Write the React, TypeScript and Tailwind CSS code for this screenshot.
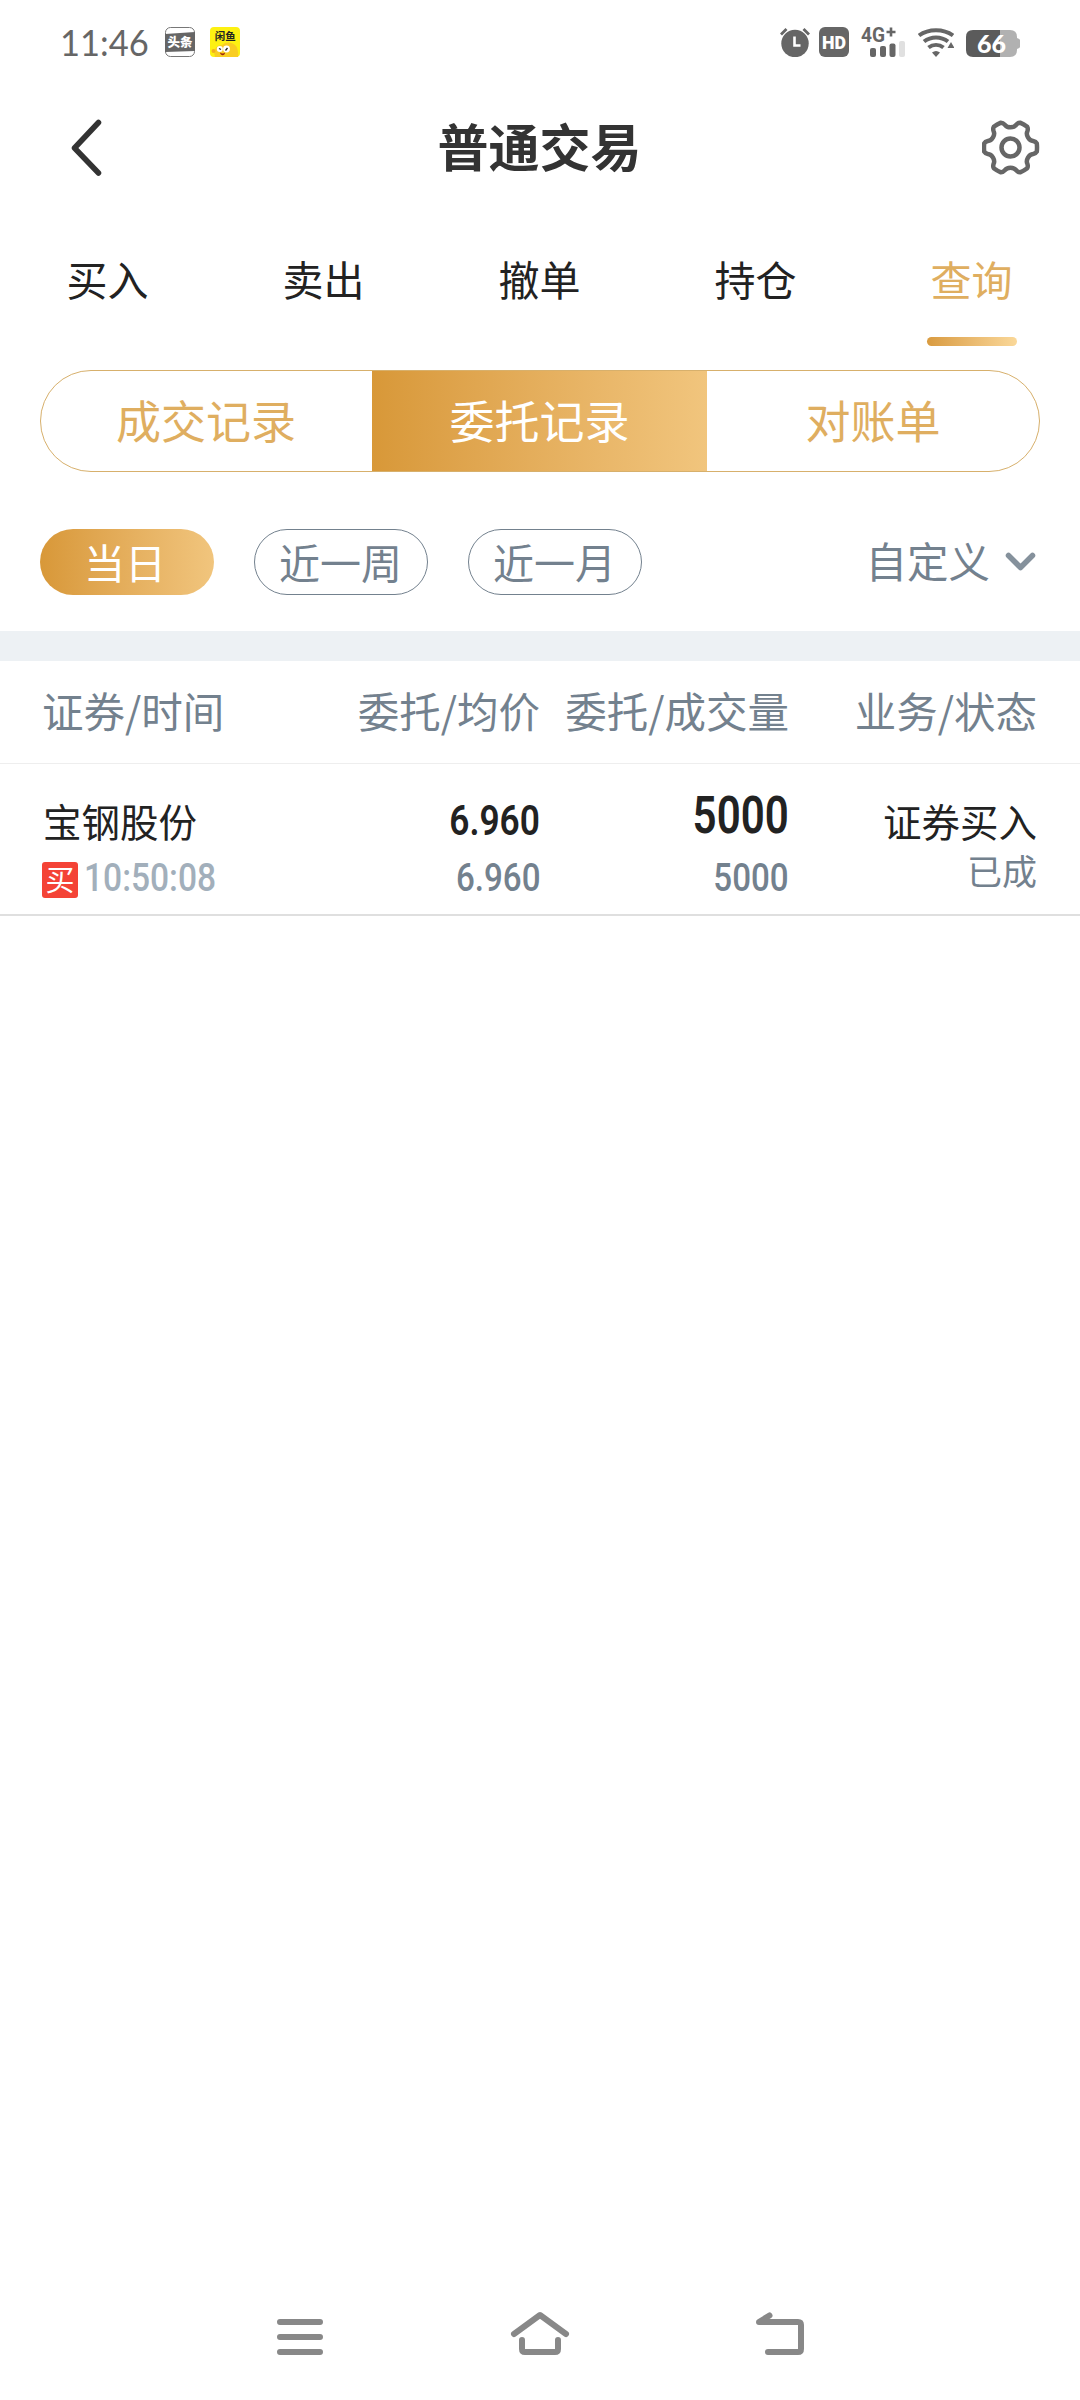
import React from "react";

const gold = "bg-gradient-to-r from-[#d89838] to-[#f1c57d]";

function StatusBar() {
  return (
    <div className="flex h-[84px] items-center pl-[60px] pr-[60px] text-[#666]">
      <span className="w-[105px] origin-left scale-x-[0.92] font-['Lato'] text-[37.5px] leading-none">11:46</span>
      <svg className="h-[30px] w-[30px]" viewBox="0 0 30 30">
        <rect x="0.5" y="0.5" width="29" height="29" rx="5" fill="#fff" stroke="#777" />
        <path d="M0 7L30 5V24L0 25Z" fill="#666" />
        <text x="15" y="19.5" fontSize="12.5" fontWeight="900" textAnchor="middle" fill="#fff">头条</text>
      </svg>
      <svg className="ml-[15px] h-[30px] w-[30px]" viewBox="0 0 30 30">
        <rect width="30" height="30" rx="4" fill="#fdf112" />
        <text x="15.2" y="13" fontSize="10.5" fontWeight="700" textAnchor="middle" fill="#222">闲鱼</text>
        <path d="M5 30C3 23 6 18 12 18C16 14 23 15 26 19C29 23 28 30 28 30Z" fill="#f9cd22" />
        <circle cx="3.5" cy="24" r="2" fill="#f2ae1c" />
        <circle cx="9.8" cy="22" r="3" fill="#fff" />
        <circle cx="16.5" cy="22" r="3.4" fill="#fff" />
        <path d="M9 21.5l2 1M15.5 23.5l2-2.5" stroke="#222" strokeWidth="1.3" />
        <path d="M10 25.5C12 27 14 26.5 15 25.5C15 29 10.5 29 10 25.5Z" fill="#9b2412" />
      </svg>
      <div className="ml-auto flex items-center">
        <svg className="h-[30px] w-[30px]" viewBox="0 0 30 30">
          <circle cx="15" cy="16.5" r="13.7" fill="#666" />
          <path d="M1 7.5L6.5 2M29 7.5L23.5 2" stroke="#666" strokeWidth="2.8" />
          <path d="M14.5 9.500V18.500H20.500" fill="none" stroke="#fff" strokeWidth="2.600" />
        </svg>
        <svg className="ml-[9px] h-[30px] w-[30px]" viewBox="0 0 30 30">
          <rect width="30" height="30" rx="6" fill="#666" />
          <text x="3" y="21.700" fontFamily="Roboto" fontSize="18.500" fontWeight="900" fill="#fff" textLength="24" lengthAdjust="spacingAndGlyphs">HD</text>
        </svg>
        <svg className="ml-[12px] h-[30px] w-[45px] overflow-visible" viewBox="0 0 45 30">
          <text x="0" y="15" fontFamily="Roboto" fontSize="20" fontWeight="700" fill="#666" textLength="24" lengthAdjust="spacingAndGlyphs">4G</text>
          <path d="M25.500 5H34.500M30 0.500V9.500" stroke="#666" strokeWidth="2.600" />
          <rect x="9" y="21" width="6" height="9" rx="2" fill="#666" />
          <rect x="19" y="19" width="6" height="11" rx="2" fill="#666" />
          <rect x="28.500" y="16.500" width="6" height="13.500" rx="2" fill="#666" />
          <rect x="38" y="14" width="6" height="16" rx="2" fill="#e0e0e0" />
        </svg>
        <svg className="ml-[12px] h-[30px] w-[36px]" viewBox="0 0 36 30">
          <g fill="none" stroke="#666" strokeWidth="4">
            <path d="M1 8.500C10.500 1.500 25.500 1.500 35 8.500" />
            <path d="M6 14.500C13 9 23 9 30 14.500" />
            <path d="M10.500 20.500C15 17 21 17 25.500 20.500" />
          </g>
          <path d="M14 25.500Q18 22.500 22 25.500L18 30Z" fill="#666" />
          <path d="M29.500 21L33 15L36.500 21Z" fill="#666" />
        </svg>
        <svg className="ml-[12px] h-[30px] w-[54px]" viewBox="0 0 54 30">
          <path d="M34 3H44Q51 3 51 10V11Q54 12 54 13V20Q54 21 51 22V23Q51 30 44 30H34Z" fill="#b1b1b1" />
          <path d="M7 3H34V30H7Q0 30 0 23V10Q0 3 7 3Z" fill="#5b5b5b" />
          <text x="25.500" y="26" fontFamily="Lato" fontSize="25" fontWeight="900" textAnchor="middle" fill="#fff">66</text>
        </svg>
      </div>
    </div>
  );
}

function gearPath() {
  const p = (deg: number, r: number) => {
    const a = (deg * Math.PI) / 180;
    return `${(r * Math.cos(a)).toFixed(2)} ${(r * Math.sin(a)).toFixed(2)}`;
  };
  let d = `M${p(-9, 26.600)}`;
  for (let k = 0; k < 360; k += 60) {
    d += `Q${p(k, 26.800)} ${p(k + 9, 26.600)}`;
    d += `Q${p(k + 13, 26)} ${p(k + 16, 23.500)}`;
    d += `C${p(k + 20, 19.600)} ${p(k + 40, 19.600)} ${p(k + 44, 23.500)}`;
    d += `Q${p(k + 47, 26)} ${p(k + 51, 26.600)}`;
  }
  return d + "Z";
}

function TitleBar() {
  return (
    <header className="grid h-[128px] grid-cols-[58px_1fr_58px] items-center pl-[70px] pr-[40px]">
      <svg className="h-[58px] w-[58px]" viewBox="0 0 58 58">
        <path d="M28.500 3.500L4.500 29L28.500 54" fill="none" stroke="#333" strokeWidth="5.500" strokeLinecap="round" strokeLinejoin="round" />
      </svg>
      <h1 className="pb-[5px] pr-[31px] text-center text-[51px] font-bold leading-none text-[#333]">普通交易</h1>
      <svg className="h-[58px] w-[58px]" viewBox="-28.500 -28.500 58 58">
        <g fill="none" stroke="#666" strokeWidth="4.500" strokeLinejoin="round">
          <path d={gearPath()} />
          <circle r="9" />
        </g>
      </svg>
    </header>
  );
}

function Tabs() {
  return (
    <nav className="grid h-[134px] grid-cols-5">
      {["买入", "卖出", "撤单", "持仓", "查询"].map((t, i) => (
        <div key={t} className={`flex flex-col items-center pt-[46px] ${i === 4 ? "text-[#dfae60]" : "text-[#222]"}`}>
          <span className="-ml-px text-[41px] leading-[40px]">{t}</span>
          {i === 4 && <span className="mt-[39px] h-[9px] w-[90px] rounded-full bg-gradient-to-r from-[#d99b3f] to-[#fad899]" />}
        </div>
      ))}
    </nav>
  );
}

function Segments() {
  return (
    <div className="mx-[40px] mt-6 flex h-[102px] overflow-hidden rounded-full border border-[#d7b06c] text-[45px] text-[#dfae60]">
      <div className="flex w-[331px] items-center justify-center pb-[3px] pr-px">成交记录</div>
      <div className={`-my-px flex w-[335px] items-center justify-center pb-[3px] text-white ${gold}`}>委托记录</div>
      <div className="flex flex-1 items-center justify-center pb-[3px]">对账单</div>
    </div>
  );
}

function Filters() {
  return (
    <div className="mt-[57px] flex h-[66px] items-center gap-10 pl-[40px] pr-[44px] text-[41px] text-[#73818e]">
      <div className={`flex h-full w-[174px] items-center justify-center rounded-full pb-[2px] pr-1 text-white ${gold}`}>当日</div>
      <div className="flex h-full w-[174px] items-center justify-center rounded-full border border-[#73818e] pb-[2px] pr-px">近一周</div>
      <div className="flex h-full w-[174px] items-center justify-center rounded-full border border-[#73818e] pb-[2px] pr-px">近一月</div>
      <div className="ml-auto flex items-center gap-[15px]">
        <span className="pb-[2px] text-[41.500px]">自定义</span>
        <svg className="h-[20px] w-[31px]" viewBox="0 0 31 20">
          <path d="M3.500 3.500L15.500 15.500L27.500 3.500" fill="none" stroke="#85919c" strokeWidth="5.500" strokeLinecap="round" strokeLinejoin="round" />
        </svg>
      </div>
    </div>
  );
}

const cols = "grid grid-cols-[260px_237px_249px_248px] pl-[43px]";

function Orders() {
  return (
    <main className="mt-9 border-t-[30px] border-[#edf1f4]">
      <div className={`${cols} h-[103px] items-center border-b border-[#eee] pb-[3px] text-[41.500px] text-[#73818e]`}>
        <span className="-ml-px">证券/时间</span>
        <span className="text-right">委托/均价</span>
        <span className="text-right">委托/成交量</span>
        <span className="text-right">业务/状态</span>
      </div>
      <div className={`${cols} h-[152px] border-b-2 border-[#dfdfdf] text-[#222]`}>
        <div className="flex flex-col pt-[36px]">
          <span className="text-[38.500px] leading-[40px]">宝钢股份</span>
          <div className="-ml-px mt-[22px] flex h-[36px] items-center">
            <span className="flex h-[36px] w-[36px] items-center justify-center rounded-[3px] bg-[#f44336] pb-[3px] text-[29px] leading-none text-white">买</span>
            <span className="relative -top-[2px] ml-[6px] origin-left scale-x-[0.86] font-['Roboto'] text-[39px] font-medium leading-none text-[#a2afbb]">10:50:08</span>
          </div>
        </div>
        <div className="flex flex-col items-end pt-[34px] font-['Roboto'] leading-none">
          <span className="origin-right scale-x-[0.84] text-[42px] font-semibold leading-[46px]">6.960</span>
          <span className="mt-[11px] origin-right scale-x-[0.85] text-[39px] font-medium leading-[46px] text-[#73818e]">6.960</span>
        </div>
        <div className="flex flex-col items-end pt-[22px] font-['Roboto'] leading-none">
          <span className="origin-right scale-x-[0.81] text-[52px] font-semibold leading-[60px]">5000</span>
          <span className="mt-[9px] origin-right scale-x-[0.85] text-[39px] font-medium leading-[46px] text-[#73818e]">5000</span>
        </div>
        <div className="flex flex-col items-end pt-[36px]">
          <span className="text-[38.500px] leading-[40px]">证券买入</span>
          <span className="mt-[10px] text-[35px] leading-[40px] text-[#73818e]">已成</span>
        </div>
      </div>
    </main>
  );
}

function SystemNav() {
  return (
    <footer className="mt-auto flex h-[90px] items-center justify-between px-[276px] pb-[42px]">
      <svg className="h-[48px] w-[48px]" viewBox="276 2310 48 48">
        <path d="M280 2322H320M280 2337H320M280 2352H320" stroke="#888" strokeWidth="6" strokeLinecap="round" />
      </svg>
      <svg className="h-[48px] w-[60px]" viewBox="510 2310 60 48">
        <path d="M514 2334L540 2315L566 2334M522 2340V2349Q522 2352 525 2352H555Q558 2352 558 2349V2340" fill="none" stroke="#888" strokeWidth="6" strokeLinecap="round" strokeLinejoin="round" />
      </svg>
      <svg className="h-[48px] w-[48px]" viewBox="756 2310 48 48">
        <path d="M768 2352H798Q801 2352 801 2349V2325Q801 2322 798 2322H759L769.500 2315.500" fill="none" stroke="#888" strokeWidth="6" strokeLinecap="round" strokeLinejoin="round" />
      </svg>
    </footer>
  );
}

export default function App() {
  return (
    <div className="flex h-[2400px] w-[1080px] flex-col bg-white font-['Noto_Sans_CJK_SC',sans-serif] leading-none">
      <StatusBar />
      <TitleBar />
      <Tabs />
      <Segments />
      <Filters />
      <Orders />
      <SystemNav />
    </div>
  );
}
